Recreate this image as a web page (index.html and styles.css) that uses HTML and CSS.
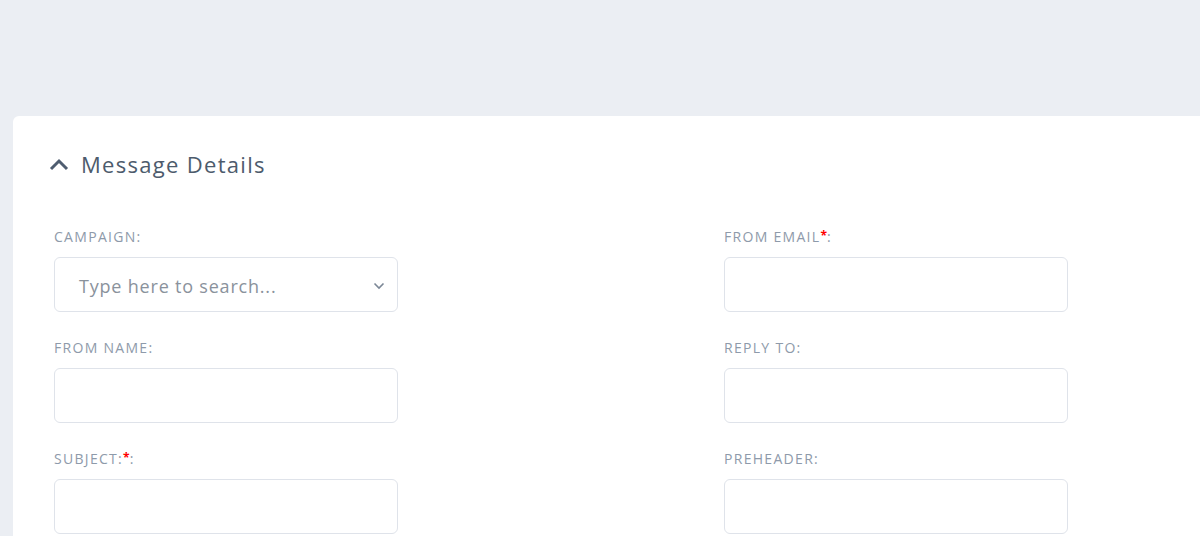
FILE: index.html
```html
<!DOCTYPE html>
<html lang="en">
<head>
    <meta charset="UTF-8">
    <meta name="viewport" content="width=device-width, initial-scale=1.0">
    <title>Message Details</title>
    <link rel="stylesheet" href="styles.css">
</head>
<body>

<div class="card">
    <div class="card-header">
        <svg class="toggle" width="20" height="14" viewBox="0 0 20 14">
            <path d="M2 11 L10 3 L18 11" fill="none" stroke="#4f5d70" stroke-width="3"/>
        </svg>
        <h2>Message Details</h2>
    </div>

    <div class="form-grid">
        <div class="field">
            <label>CAMPAIGN:</label>
            <div class="select">
                <span class="placeholder">Type here to search...</span>
                <svg width="12" height="8" viewBox="0 0 12 8">
                    <path d="M1.5 1.5 L6 6 L10.5 1.5" fill="none" stroke="#7b8796" stroke-width="1.6"/>
                </svg>
            </div>
        </div>
        <div class="field">
            <label>FROM EMAIL<span class="req">*</span>:</label>
            <input type="text">
        </div>
        <div class="field">
            <label>FROM NAME:</label>
            <input type="text">
        </div>
        <div class="field">
            <label>REPLY TO:</label>
            <input type="text">
        </div>
        <div class="field">
            <label>SUBJECT:<span class="req">*</span>:</label>
            <input type="text">
        </div>
        <div class="field">
            <label>PREHEADER:</label>
            <input type="text">
        </div>
    </div>
</div>

</body>
</html>
```

FILE: styles.css
```css
body {
    font-family: "Open Sans", Arial, sans-serif;
    background-color: #ebeef3;
    margin: 0;
    padding: 116px 0 0 13px;
    overflow: hidden;
}
.card {
    background-color: #ffffff;
    border-radius: 6px 0 0 0;
    padding: 33px 0 40px 41px;
    min-height: 500px;
}
.card-header {
    display: flex;
    align-items: center;
    gap: 12px;
    margin-left: -5px;
}
.toggle {
    margin-top: 1px;
}
h2 {
    margin: 0;
    font-size: 22px;
    font-weight: 400;
    color: #4d5b6c;
    letter-spacing: 1.3px;
}
.form-grid {
    display: grid;
    grid-template-columns: 344px 344px;
    column-gap: 326px;
    row-gap: 27px;
    margin-top: 49px;
}
.field label {
    display: block;
    font-size: 14px;
    color: #8e9aaa;
    letter-spacing: 1.3px;
    line-height: 18px;
    margin-bottom: 11px;
}
.req {
    color: #ff0000;
    font-size: 12px;
    font-weight: 700;
    line-height: 0;
    vertical-align: 2px;
    letter-spacing: 0;
}
input[type="text"], .select {
    box-sizing: border-box;
    width: 344px;
    height: 55px;
    border: 1px solid #dfe3ea;
    border-radius: 6px;
    background: #fff;
    margin: 0;
}
.select {
    display: flex;
    align-items: center;
    justify-content: space-between;
    padding: 3px 12px 0 24px;
}
.placeholder {
    font-size: 18px;
    color: #8a929c;
    letter-spacing: 0.8px;
}
```
